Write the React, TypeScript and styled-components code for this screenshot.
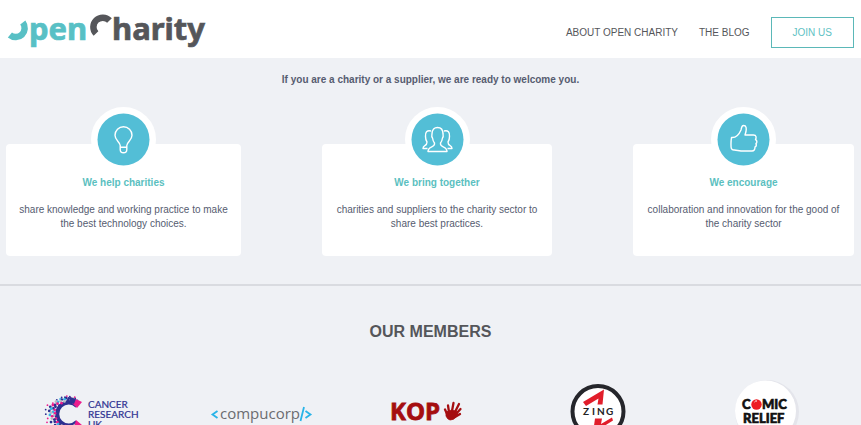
import React from "react";
import styled, { createGlobalStyle } from "styled-components";

const GlobalStyle = createGlobalStyle`
  * { box-sizing: border-box; }
  body {
    margin: 0;
    background: #eff1f5;
    color: #565c70;
    font-family: "Liberation Sans", Arial, sans-serif;
    font-size: 10px;
    line-height: 14px;
  }
  h2, h3, p, ul { margin: 0; padding: 0; }
  svg { display: block; overflow: visible; }
`;

const Header = styled.header`
  display: flex;
  align-items: center;
  justify-content: space-between;
  height: 58px;
  padding: 7px 7px 0;
  background: #fff;
`;

const HomeLink = styled.a`
  display: block;
  margin-bottom: 5px;
`;

const Nav = styled.nav`
  display: flex;
  align-items: center;
  gap: 21px;
`;

const NavLink = styled.a<{ $boxed?: boolean }>`
  color: ${(p) => (p.$boxed ? "#5fc2c4" : "#55565a")};
  text-decoration: none;
  border: ${(p) => (p.$boxed ? "1px solid #5bb8b8" : "0")};
  padding: ${(p) => (p.$boxed ? "8px 21px 7px" : "0")};
`;

const Tagline = styled.p`
  padding: 15px 0 21px;
  font-weight: bold;
  text-align: center;
`;

const Cards = styled.section`
  display: grid;
  grid-template-columns: 235fr 230fr 221fr;
  column-gap: 81px;
  padding: 36px 7px 28px 6px;
`;

const Card = styled.article`
  display: flex;
  flex-direction: column;
  align-items: center;
  padding: 0 9px 25px;
  background: #fff;
  border-radius: 4px;
  text-align: center;
`;

const Badge = styled.div`
  display: flex;
  flex: none;
  width: 65px;
  height: 65px;
  margin-top: -37px;
  border: 6px solid #fff;
  border-radius: 50%;
  background: #fff;
`;

const CardTitle = styled.h3`
  margin: 4px 0 13px;
  color: #5bbfbf;
  font-size: 10px;
`;

const Members = styled.section`
  border-top: 2px solid #d9dbe0;
  padding: 36px 8px 0;
`;

const MembersTitle = styled.h2`
  color: #55565a;
  font-size: 16px;
  line-height: 20px;
  text-align: center;
`;

const LogoList = styled.ul`
  display: grid;
  grid-template-columns: repeat(5, 1fr);
  justify-items: center;
  padding-top: 36px;
  list-style: none;
`;

const LogoText = styled.text<{ $size: number; $font: string; $weight?: number }>`
  font-family: ${(p) => p.$font}, sans-serif;
  font-size: ${(p) => p.$size}px;
  font-weight: ${(p) => p.$weight ?? 400};
`;

const OpenCharityLogo = () => (
  <svg width="200" height="40" viewBox="6 10 200 40" role="img" aria-label="Open Charity">
    <path d="M8.900 35A9 9 0 0 0 21.800 22.600" fill="none" stroke="#58c0c5" strokeWidth="6.500" />
    <g fill="#58c0c5" stroke="#58c0c5" strokeWidth=".7">
      <LogoText x="28" y="40" $size={31} $font='"Noto Sans"' $weight={700}>pen</LogoText>
    </g>
    <path d="M95 33.500A9 9 0 0 1 108.500 20.500" fill="none" stroke="#55565a" strokeWidth="6.500" />
    <g fill="#55565a" stroke="#55565a" strokeWidth=".7">
      <LogoText x="111" y="40" $size={31} $font='"Noto Sans"' $weight={700}>harity</LogoText>
    </g>
  </svg>
);

const Disc = ({ children }: { children: React.ReactNode }) => (
  <svg width="53" height="53" viewBox="0 0 53 53" aria-hidden="true">
    <circle cx="26.500" cy="26.500" r="26" fill="#53bed6" />
    <g fill="none" stroke="#fff" strokeWidth="1.400" strokeLinejoin="round">{children}</g>
  </svg>
);

const BulbIcon = () => (
  <Disc>
    <path d="M23.200 34v-1.500c0-3.500-5.200-5-5.200-10.200a8.500 8.500 0 0 1 17 0C35 27.500 29.800 29 29.800 32.500V36.500q0 3.300-3.300 3.300T23.200 36.500zM23.200 34.300H29.800" />
  </Disc>
);

const PeopleIcon = () => (
  <Disc>
    <path d="M17 38.500c0-6 7.500-3.500 6.500-8.500c-1.200-1.500-1.700-3-2-5c-1.200-1.500-.700-3-.500-4c0-4.500 2.500-6.500 5.500-6.500s5.500 2 5.500 6.500c.200 1 .700 2.500-.500 4c-.300 2-.800 3.500-2 5c-1 5 6.500 2.500 6.500 8.500z" />
    <path d="M20 18c-4-1-6 1-5.500 5.500c0 2 .500 4 1.500 5.500c0 5-4 2.500-4 6.500h4.500M33 18c4-1 6 1 5.500 5.500c0 2-.500 4-1.500 5.500c0 5 4 2.500 4 6.500h-4.500" />
  </Disc>
);

const ThumbIcon = () => (
  <Disc>
    <path d="M14.500 24.500c4 .500 7.500-3 9.500-7.500c.500-2 .500-4.500 2.500-4.500c3 0 3 3 2.500 6l-1 3.500h8.500c3 0 3 3 2 4.500c2 1 1.500 3.500 .500 4c.500 1.500 .500 3-1 3.500c0 2.500-1 4-3 4h-8.500c-3 0-5-.500-9-1c-4 .500-3.500-3.500-3.500-6.500q0-3 .500-6z" />
  </Disc>
);

const LogoSvg = ({ x, label, children }: { x: number; label: string; children: React.ReactNode }) => (
  <svg width="139" height="70" viewBox={`${x} 378 139 70`} role="img" aria-label={label}>{children}</svg>
);

const dotColors = ["#2e3191", "#ec1c8c", "#2e3191", "#b9b9c6", "#ec1c8c", "#35b6e8", "#2e3191"];
const dots = Array.from({ length: 84 }, (_, i) => {
  const angle = 0.95 + (i / 84) * 4.4;
  const spread = (i * 31 + (i % 5) * 4) % 13;
  const reach = 1 + Math.max(0, -Math.cos(angle)) * 0.7;
  return {
    x: 68 + (12 + spread * 0.6 * reach) * Math.cos(angle),
    y: 414 - (12 + spread * 0.5) * Math.sin(angle),
    r: spread > 8 ? 0.9 : 1.4,
    fill: dotColors[(i * 5 + Math.floor(i / 6)) % 7],
  };
});

const CancerResearchLogo = () => (
  <LogoSvg x={23} label="Cancer Research UK">
    <path d="M77 406A11.500 11.500 0 1 0 77 422" fill="none" stroke="#2e3191" strokeWidth="4" />
    {dots.map((d, i) => <circle key={i} cx={d.x} cy={d.y} r={d.r} fill={d.fill} />)}
    <path d="M76 399l6 3-5 6-4-4zM76 420l6 5-9 6z" fill="#ec1c8c" />
    <path d="M70 397l6 2-2 5-5-2z" fill="#2e3191" />
    <g fill="#2e3191" stroke="#2e3191" strokeWidth=".2">
      <LogoText x="88" y="408" $size={10} $font="Lato">CANCER</LogoText>
      <LogoText x="88" y="418" $size={10} $font="Lato">RESEARCH</LogoText>
      <LogoText x="88" y="428" $size={10} $font="Lato">UK</LogoText>
    </g>
  </LogoSvg>
);

const CompucorpLogo = () => (
  <LogoSvg x={192} label="Compucorp">
    <path d="M217.500 411l-5 3.500 5 3.500M305.500 411l5 3.500-5 3.500M304 407l-3.500 14" fill="none" stroke="#29b4e8" strokeWidth="1.800" />
    <LogoText x="220" y="419" fill="#6b6c70" $size={15} $font='"Open Sans"'>compucorp</LogoText>
  </LogoSvg>
);

const KopLogo = () => (
  <LogoSvg x={361} label="KOP">
    <g fill="#a50e10" stroke="#a50e10" strokeWidth=".8">
      <LogoText x="390" y="420" $size={24} $font='"Open Sans"' $weight={700}>KOP</LogoText>
      <path d="M446 412q5-3 10-1q3 3 0 6q-2 3-6 3q-3-1-4-4z" />
    </g>
    <path d="M448 416l-3-6.500M449 412l-1-6.500M452 411l1.500-8M455 412l4-8M456 414l4.500-5M455 417l5-3" fill="none" stroke="#a50e10" strokeWidth="2.300" strokeLinecap="round" />
  </LogoSvg>
);

const ZingLogo = () => (
  <LogoSvg x={530} label="Zing">
    <circle cx="598" cy="411.500" r="25.500" fill="#fff" stroke="#25262b" strokeWidth="4" />
    <path d="M583 402L604 389.500L602.500 404.500H597.500L598.500 398.500L586 406z" fill="#e11e2b" />
    <path d="M612 417.500L601 424L602 418.500H595L593 433L613 420.500z" fill="#e11e2b" />
    <LogoText y="415" fill="#222" $size={10} $font="Lato" $weight={700}>
      <tspan x="583">Z</tspan><tspan x="592">I</tspan><tspan x="597">N</tspan><tspan x="606">G</tspan>
    </LogoText>
  </LogoSvg>
);

const ComicReliefLogo = () => (
  <LogoSvg x={699} label="Comic Relief">
    <circle cx="767" cy="412" r="32" fill="#e4e5eb" />
    <circle cx="765.500" cy="411" r="30.500" fill="#fff" />
    <g fill="#111" stroke="#111" strokeWidth=".6">
      <LogoText x="742" y="409" $size={13} $font="Lato" $weight={900}>C</LogoText>
      <LogoText x="762" y="409" $size={13} $font="Lato" $weight={900}>MIC</LogoText>
      <LogoText x="743" y="423" $size={13} $font="Lato" $weight={900}>RELIEF</LogoText>
    </g>
    <circle cx="756.500" cy="404.500" r="5.200" fill="#ed1c24" />
    <path d="M754.500 402q1-1.500 2.500-1" stroke="#fff" fill="none" />
  </LogoSvg>
);

const features = [
  { title: "We help charities", text: "share knowledge and working practice to make the best technology choices.", Icon: BulbIcon },
  { title: "We bring together", text: "charities and suppliers to the charity sector to share best practices.", Icon: PeopleIcon },
  { title: "We encourage", text: "collaboration and innovation for the good of the charity sector", Icon: ThumbIcon },
];

const memberLogos = [CancerResearchLogo, CompucorpLogo, KopLogo, ZingLogo, ComicReliefLogo];

export default function App() {
  return (
    <>
      <GlobalStyle />
      <Header>
        <HomeLink href="#home"><OpenCharityLogo /></HomeLink>
        <Nav>
          <NavLink href="#about">ABOUT OPEN CHARITY</NavLink>
          <NavLink href="#blog">THE BLOG</NavLink>
          <NavLink href="#join" $boxed>JOIN US</NavLink>
        </Nav>
      </Header>
      <main>
        <Tagline>If you are a charity or a supplier, we are ready to welcome you.</Tagline>
        <Cards>
          {features.map(({ title, text, Icon }) => (
            <Card key={title}>
              <Badge><Icon /></Badge>
              <CardTitle>{title}</CardTitle>
              <p>{text}</p>
            </Card>
          ))}
        </Cards>
        <Members>
          <MembersTitle>OUR MEMBERS</MembersTitle>
          <LogoList>
            {memberLogos.map((Logo, i) => <li key={i}><Logo /></li>)}
          </LogoList>
        </Members>
      </main>
    </>
  );
}
